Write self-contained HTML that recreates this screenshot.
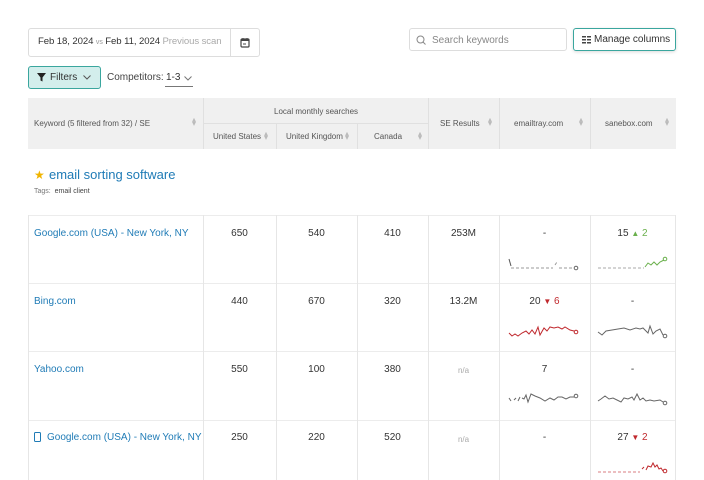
<!DOCTYPE html>
<html><head><style>
*{box-sizing:border-box;margin:0;padding:0}
body{width:704px;height:480px;background:#fff;font-family:"Liberation Sans",sans-serif;position:relative;overflow:hidden;color:#333}
.a{position:absolute}
.hd{background:#f0f0f0}
.vl{position:absolute;width:1px;background:#e6e6e6}
.hl{position:absolute;height:1px;background:#ececec}
.ht{position:absolute;font-size:8px;color:#555;white-space:nowrap}
.sort{position:absolute;font-size:7px;color:#bbb;line-height:4px}
.link{position:absolute;font-size:10px;color:#1f7bb6;white-space:nowrap}
.num{position:absolute;font-size:10px;color:#333;text-align:center}
.na{position:absolute;font-size:8px;color:#aaa;text-align:center}
</style></head><body>
<!-- date picker -->
<div class="a" style="left:28px;top:28px;width:232px;height:29px;border:1px solid #ddd;border-radius:3px"></div>
<div class="a" style="left:230px;top:28px;width:1px;height:29px;background:#ddd"></div>
<div class="a" style="left:38px;top:36px;font-size:9.6px;white-space:nowrap;letter-spacing:-0.1px">Feb 18, 2024 <span style="font-size:7px;color:#999">vs</span> Feb 11, 2024 <span style="color:#aaa">Previous scan</span></div>
<svg class="a" style="left:240px;top:37px" width="10" height="11" viewBox="0 0 10 11"><rect x="1" y="2" width="8" height="8" rx="1" fill="none" stroke="#444" stroke-width="1.2"/><rect x="1" y="2" width="8" height="2" fill="#444"/><line x1="3" y1="1" x2="3" y2="3" stroke="#444"/><line x1="7" y1="1" x2="7" y2="3" stroke="#444"/><line x1="3" y1="7" x2="6" y2="7" stroke="#444"/></svg>
<!-- search -->
<div class="a" style="left:409px;top:28px;width:158px;height:23px;border:1px solid #ddd;border-radius:3px"></div>
<svg class="a" style="left:416px;top:35px" width="10" height="11"><circle cx="4.5" cy="4.5" r="3.5" fill="none" stroke="#888" stroke-width="1"/><line x1="7" y1="7" x2="9.5" y2="9.5" stroke="#888"/></svg>
<div class="a" style="left:432px;top:35px;font-size:10px;color:#888">Search keywords</div>
<div class="a" style="left:573px;top:28px;width:103px;height:23px;border:1px solid #3aa69e;border-radius:3px;box-shadow:0 1px 3px rgba(0,0,0,.15)"></div>
<svg class="a" style="left:582px;top:35px" width="10" height="10"><g fill="#444"><rect x="0" y="1" width="4" height="1.5"/><rect x="0" y="4" width="4" height="1.5"/><rect x="0" y="7" width="4" height="1.5"/><rect x="5" y="1" width="4" height="1.5"/><rect x="5" y="4" width="4" height="1.5"/><rect x="5" y="7" width="4" height="1.5"/></g></svg>
<div class="a" style="left:594px;top:34px;font-size:10px;color:#333">Manage columns</div>
<!-- filters -->
<div class="a" style="left:28px;top:66px;width:73px;height:23px;background:#d3eeec;border:1px solid #3aa69e;border-radius:3px"></div>
<svg class="a" style="left:37px;top:73px" width="10" height="9"><path d="M0 0H9L5.5 4.5V8.5L3.5 7.5V4.5Z" fill="#222"/></svg>
<div class="a" style="left:50px;top:72px;font-size:10px;color:#333">Filters</div>
<svg class="a" style="left:83px;top:75px" width="8" height="5"><path d="M0.5 0.5L4 4L7.5 0.5" fill="none" stroke="#555"/></svg>
<div class="a" style="left:107px;top:72px;font-size:10px;color:#444">Competitors:</div>
<div class="a" style="left:166px;top:72px;font-size:10px;color:#333">1-3</div>
<svg class="a" style="left:184px;top:76px" width="8" height="5"><path d="M0.5 0.5L4 4L7.5 0.5" fill="none" stroke="#777"/></svg>
<div class="a" style="left:165px;top:86px;width:28px;height:1px;background:#777"></div>
<!-- header -->
<div class="a hd" style="left:28px;top:98px;width:648px;height:51px"></div>
<div class="vl" style="left:203px;top:98px;height:51px;background:#e0e0e0"></div>
<div class="vl" style="left:428px;top:98px;height:51px;background:#e0e0e0"></div>
<div class="vl" style="left:499px;top:98px;height:51px;background:#e0e0e0"></div>
<div class="vl" style="left:590px;top:98px;height:51px;background:#e0e0e0"></div>
<div class="vl" style="left:276px;top:124px;height:25px;background:#e0e0e0"></div>
<div class="vl" style="left:357px;top:124px;height:25px;background:#e0e0e0"></div>
<div class="a" style="left:203px;top:123px;width:225px;height:1px;background:#e0e0e0"></div>
<div class="ht" style="left:34px;top:119px">Keyword (5 filtered from 32) / SE</div>
<div class="ht" style="left:274px;top:107px">Local monthly searches</div>
<div class="ht" style="left:213px;top:132px">United States</div>
<div class="ht" style="left:286px;top:132px">United Kingdom</div>
<div class="ht" style="left:374px;top:132px">Canada</div>
<div class="ht" style="left:440px;top:119px">SE Results</div>
<div class="ht" style="left:514px;top:119px">emailtray.com</div>
<div class="ht" style="left:605px;top:119px">sanebox.com</div>
<div class="sort" style="left:192px;top:118px;font-size:8px">▴<br>▾</div>
<div class="sort" style="left:264px;top:132px;font-size:8px">▴<br>▾</div>
<div class="sort" style="left:345px;top:132px;font-size:8px">▴<br>▾</div>
<div class="sort" style="left:418px;top:132px;font-size:8px">▴<br>▾</div>
<div class="sort" style="left:488px;top:118px;font-size:8px">▴<br>▾</div>
<div class="sort" style="left:579px;top:118px;font-size:8px">▴<br>▾</div>
<div class="sort" style="left:665px;top:118px;font-size:8px">▴<br>▾</div>
<!-- keyword group -->
<div class="a" style="left:34px;top:168px;font-size:12px;color:#f0b400">★</div>
<div class="a" style="left:49px;top:167px;font-size:13px;color:#1f7bb6">email sorting software</div>
<div class="a" style="left:34px;top:188px;font-size:7px;color:#777">Tags: &nbsp;<span style="color:#444">email client</span></div>
<!-- grid -->
<div class="hl" style="left:28px;top:215px;width:648px"></div>
<div class="hl" style="left:28px;top:283px;width:648px"></div>
<div class="hl" style="left:28px;top:351px;width:648px"></div>
<div class="hl" style="left:28px;top:420px;width:648px"></div>
<div class="vl" style="left:28px;top:215px;height:265px"></div>
<div class="vl" style="left:203px;top:215px;height:265px"></div>
<div class="vl" style="left:276px;top:215px;height:265px"></div>
<div class="vl" style="left:357px;top:215px;height:265px"></div>
<div class="vl" style="left:428px;top:215px;height:265px"></div>
<div class="vl" style="left:499px;top:215px;height:265px"></div>
<div class="vl" style="left:590px;top:215px;height:265px"></div>
<div class="vl" style="left:675px;top:215px;height:265px"></div>
<!-- rows -->
<div class="link" style="left:34px;top:228px">Google.com (USA) - New York, NY</div>
<div class="link" style="left:34px;top:296px">Bing.com</div>
<div class="link" style="left:34px;top:364px">Yahoo.com</div>
<svg class="a" style="left:34px;top:432px" width="7" height="10"><rect x="0.5" y="0.5" width="6" height="9" rx="1" fill="none" stroke="#1f7bb6"/></svg>
<div class="link" style="left:47px;top:432px">Google.com (USA) - New York, NY</div>

<div class="num" style="left:203px;top:228px;width:73px">650</div>
<div class="num" style="left:276px;top:228px;width:81px">540</div>
<div class="num" style="left:357px;top:228px;width:71px">410</div>
<div class="num" style="left:428px;top:228px;width:71px">253M</div>
<div class="num" style="left:203px;top:296px;width:73px">440</div>
<div class="num" style="left:276px;top:296px;width:81px">670</div>
<div class="num" style="left:357px;top:296px;width:71px">320</div>
<div class="num" style="left:428px;top:296px;width:71px">13.2M</div>
<div class="num" style="left:203px;top:364px;width:73px">550</div>
<div class="num" style="left:276px;top:364px;width:81px">100</div>
<div class="num" style="left:357px;top:364px;width:71px">380</div>
<div class="na" style="left:428px;top:366px;width:71px">n/a</div>
<div class="num" style="left:203px;top:432px;width:73px">250</div>
<div class="num" style="left:276px;top:432px;width:81px">220</div>
<div class="num" style="left:357px;top:432px;width:71px">520</div>
<div class="na" style="left:428px;top:435px;width:71px">n/a</div>

<div class="num" style="left:499px;top:228px;width:91px">-</div>
<div class="num" style="left:590px;top:228px;width:85px">15 <span style="color:#6ab04c;font-size:8px">▲</span> <span style="color:#6ab04c">2</span></div>
<div class="num" style="left:499px;top:296px;width:91px">20 <span style="color:#c0282d;font-size:8px">▼</span> <span style="color:#c0282d">6</span></div>
<div class="num" style="left:590px;top:296px;width:85px">-</div>
<div class="num" style="left:499px;top:364px;width:91px">7</div>
<div class="num" style="left:590px;top:364px;width:85px">-</div>
<div class="num" style="left:499px;top:432px;width:91px">-</div>
<div class="num" style="left:590px;top:432px;width:85px">27 <span style="color:#c0282d;font-size:8px">▼</span> <span style="color:#c0282d">2</span></div>

<svg class="a" style="left:0;top:0" width="704" height="480" fill="none" stroke-width="1">
<path d="M509 259L511 266" stroke="#555"/>
<path d="M511 268H553M555 265L557 262M559 268H574" stroke="#999" stroke-dasharray="3 2"/>
<circle cx="576" cy="268" r="1.8" stroke="#666"/>
<path d="M598 268H644" stroke="#aaa" stroke-dasharray="3 2"/>
<path d="M645 267L648 263L651 265L654 262L657 265L660 262L664 260" stroke="#6ab04c"/>
<circle cx="665" cy="259" r="1.8" stroke="#6ab04c"/>
<path d="M509 333L512 336L515 334L518 336L522 333L526 331L529 334L532 330L535 334L538 327L540 335L544 328L547 331L550 327L554 328L558 327L562 329L565 327L570 330L574 331" stroke="#c0282d"/>
<circle cx="576" cy="332" r="1.8" stroke="#c0282d"/>
<path d="M598 332L602 335L606 331L612 330L618 329L624 328L630 330L636 328L640 329L643 328L646 331L648 333L650 326L653 334L656 331L660 329L663 335" stroke="#666"/>
<circle cx="665" cy="336" r="1.8" stroke="#666"/>
<path d="M509 398L511 401M514 400L516 398M518 401L520 397M522 398L524 399L526 395L528 402L531 394L535 396L540 398L545 401L550 398L554 400L558 397L562 397L566 399L570 397L574 397" stroke="#666"/>
<circle cx="576" cy="396" r="1.8" stroke="#666"/>
<path d="M598 401L601 399L605 396L609 399L613 398L617 400L621 402L624 398L628 399L632 397L634 400L637 394L640 400L643 398L646 401L650 400L654 401L660 400L663 402" stroke="#666"/>
<circle cx="665" cy="403" r="1.8" stroke="#666"/>
<path d="M598 472H640" stroke="#c0282d" stroke-opacity=".6" stroke-dasharray="3 2"/>
<path d="M642 469L644 467M646 470L648 466L651 467L653 463L655 467L657 465L659 469L661 468L663 471" stroke="#c0282d"/>
<circle cx="665" cy="471" r="1.8" stroke="#c0282d"/>
</svg>
</body></html>
